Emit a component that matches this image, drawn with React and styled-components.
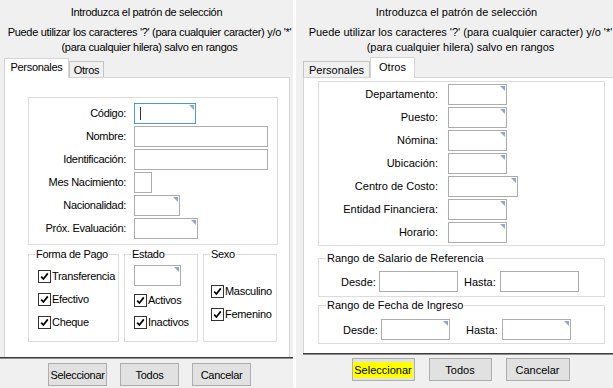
import React from 'react';
import styled, { createGlobalStyle, css } from 'styled-components';

const Global = createGlobalStyle`
  html, body { margin: 0; padding: 0; background: #ffffff; }
  body {
    font-family: "Liberation Sans", Arial, sans-serif;
    font-size: 11px;
    color: #000;
  }
  * { box-sizing: border-box; }
`;

const Screen = styled.div`
  display: flex;
  gap: 3px;
  width: 613px;
  height: 388px;
  overflow: hidden;
`;

const Dialog = styled.div`
  flex: none;
  width: ${(p) => p.$w}px;
  height: ${(p) => p.$h}px;
  background: #f0f0f0;
  display: flex;
  flex-direction: column;
  letter-spacing: ${(p) => (p.$narrow ? '-0.3px' : '0')};
  overflow: hidden;
`;

const Title = styled.div`
  padding-top: 5px;
  line-height: 14px;
  text-align: center;
`;

const Subtitle = styled.div`
  margin-top: 6px;
  padding-left: ${(p) => p.$shift}px;
  line-height: 15px;
  text-align: center;
  white-space: nowrap;
`;

const TabStrip = styled.div`
  display: flex;
  align-items: flex-end;
  height: 20px;
  margin-top: 2px;
  margin-left: ${(p) => p.$inset}px;
`;

const Tab = styled.div`
  position: relative;
  width: ${(p) => p.$w}px;
  display: flex;
  align-items: center;
  justify-content: center;
  border: 1px solid ${(p) => (p.$active ? '#d4d4d4' : '#c4c4c4')};
  border-bottom: none;
  ${(p) =>
    p.$active
      ? css`
          height: ${p.$h || 21}px;
          margin-bottom: -1px;
          background: #ffffff;
          z-index: 1;
          padding-bottom: 3px;
        `
      : css`
          height: 16px;
          background: #f0f0f0;
        `}
`;

const Panel = styled.div`
  flex: 1;
  background: #ffffff;
  border: 1px solid #d4d4d4;
  border-bottom: none;
  margin-left: ${(p) => p.$inset}px;
  margin-right: 3px;
  padding: ${(p) => p.$pad};
  display: flex;
  flex-direction: column;
  align-items: flex-start;
`;

const Separator = styled.div`
  height: 2px;
  margin-left: ${(p) => p.$inset}px;
  border-top: 1px solid #3c3c3c;
  border-bottom: 1px solid #8c8c8c;
`;

const ButtonRow = styled.div`
  display: flex;
  justify-content: center;
  gap: ${(p) => p.$gap}px;
  padding: ${(p) => p.$pt}px 0 ${(p) => p.$pb}px ${(p) => p.$shift}px;
`;

const Button = styled.div`
  width: ${(p) => p.$w}px;
  height: 23px;
  display: flex;
  align-items: center;
  justify-content: center;
  background: #e1e1e1;
  border: 1px solid #adadad;
`;

const Highlight = styled.span`
  background: #ffff00;
  padding: 2px 1px;
  line-height: 12px;
`;

const Box = styled.div`
  width: ${(p) => p.$w}px;
  border: 1px solid #dcdcdc;
  padding: ${(p) => p.$pad};
  display: grid;
  grid-template-columns: ${(p) => p.$labelW}px auto;
  column-gap: ${(p) => p.$gap}px;
  row-gap: 2px;
  align-items: center;
  justify-items: start;
`;

const Label = styled.span`
  justify-self: end;
  white-space: nowrap;
  line-height: 13px;
`;

const Field = styled.div`
  position: relative;
  flex: none;
  width: ${(p) => p.$w}px;
  height: 21px;
  background: #ffffff;
  border: 1px solid ${(p) => (p.$focus ? '#4b97e3' : '#acacac')};
  display: flex;
  align-items: center;
  ${(p) =>
    p.$combo &&
    css`
      &::after {
        content: '';
        position: absolute;
        top: 1px;
        right: 1px;
        border-top: 5px solid #93a6c3;
        border-left: 5px solid transparent;
      }
    `}
`;

const Caret = styled.span`
  width: 1px;
  height: 13px;
  margin-left: 5px;
  background: #333;
`;

const GroupRow = styled.div`
  display: flex;
  gap: ${(p) => p.$gap}px;
  margin-top: ${(p) => p.$mt}px;
`;

const Group = styled.fieldset`
  margin: 0;
  min-width: 0;
  width: ${(p) => p.$w}px;
  height: ${(p) => p.$h}px;
  border: 1px solid #dcdcdc;
  padding: 0 4px 0 ${(p) => p.$pl}px;
  margin-top: ${(p) => p.$mt || 0}px;
`;

const Legend = styled.legend`
  padding: 0 1px;
  line-height: 13px;
`;

const Stack = styled.div`
  display: flex;
  flex-direction: column;
  align-items: flex-start;
  gap: ${(p) => p.$gap}px;
  padding-top: ${(p) => p.$pt}px;
  padding-left: ${(p) => p.$pl}px;
`;

const CheckRow = styled.div`
  display: flex;
  align-items: center;
  gap: 1px;
  height: 16px;
  white-space: nowrap;
`;

const CheckBox = styled.span`
  width: 13px;
  height: 13px;
  flex: none;
  background: #fff;
  border: 1px solid #333;
  display: flex;
  align-items: center;
  justify-content: center;
`;

const RangeRow = styled.div`
  display: flex;
  align-items: center;
  padding-top: ${(p) => p.$pt}px;
  padding-left: ${(p) => p.$pl}px;
`;

const RangeLabel = styled.span`
  width: ${(p) => p.$w}px;
  margin-left: ${(p) => p.$ml || 0}px;
  margin-right: 4px;
  white-space: nowrap;
`;

function Check({ children }) {
  return (
    <CheckRow>
      <CheckBox>
        <svg width="9" height="9" viewBox="0 0 9 9">
          <path d="M1.2 4.6 L3.4 7 L7.8 1.4" fill="none" stroke="#000" strokeWidth="1.7" />
        </svg>
      </CheckBox>
      <span>{children}</span>
    </CheckRow>
  );
}

function Header({ shift, inset, tabs }) {
  return (
    <>
      <Title>Introduzca el patrón de selección</Title>
      <Subtitle $shift={shift}>
        Puede utilizar los caracteres '?' (para cualquier caracter) y/o '*'
        <br />
        (para cualquier hilera) salvo en rangos
      </Subtitle>
      <TabStrip $inset={inset}>
        {tabs.map((t) => (
          <Tab key={t.label} $w={t.w} $active={t.active} $h={t.h}>
            {t.label}
          </Tab>
        ))}
      </TabStrip>
    </>
  );
}

function Footer({ inset, gap, pt, pb, shift, widths, highlight }) {
  return (
    <>
      <Separator $inset={inset} />
      <ButtonRow $gap={gap} $pt={pt} $pb={pb} $shift={shift}>
        <Button $w={widths[0]}>
          {highlight ? <Highlight>Seleccionar</Highlight> : 'Seleccionar'}
        </Button>
        <Button $w={widths[1]}>Todos</Button>
        <Button $w={widths[2]}>Cancelar</Button>
      </ButtonRow>
    </>
  );
}

function Personales() {
  return (
    <Dialog $w={293} $h={388} $narrow>
      <Header
        shift={6}
        inset={4}
        tabs={[
          { label: 'Personales', w: 65, active: true, h: 20 },
          { label: 'Otros', w: 35 },
        ]}
      />
      <Panel $inset={4} $pad="19px 0 0 23px">
        <Box $w={250} $labelW={97} $gap={8} $pad="5px 0 5px 0">
          <Label>Código:</Label>
          <Field $w={62} $focus $combo>
            <Caret />
          </Field>
          <Label>Nombre:</Label>
          <Field $w={134} />
          <Label>Identificación:</Label>
          <Field $w={134} />
          <Label>Mes Nacimiento:</Label>
          <Field $w={18} />
          <Label>Nacionalidad:</Label>
          <Field $w={46} $combo />
          <Label>Próx. Evaluación:</Label>
          <Field $w={64} $combo />
        </Box>
        <GroupRow $gap={5} $mt={3}>
          <Group $w={91} $h={94} $pl={6}>
            <Legend>Forma de Pago</Legend>
            <Stack $gap={7} $pt={7} $pl={3}>
              <Check>Transferencia</Check>
              <Check>Efectivo</Check>
              <Check>Cheque</Check>
            </Stack>
          </Group>
          <Group $w={74} $h={94} $pl={6}>
            <Legend>Estado</Legend>
            <Stack $gap={6} $pt={4} $pl={3}>
              <Field $w={47} $combo />
              <Check>Activos</Check>
              <Check>Inactivos</Check>
            </Stack>
          </Group>
          <Group $w={74} $h={94} $pl={6}>
            <Legend>Sexo</Legend>
            <Stack $gap={7} $pt={22} $pl={1}>
              <Check>Masculino</Check>
              <Check>Femenino</Check>
            </Stack>
          </Group>
        </GroupRow>
      </Panel>
      <Footer inset={0} gap={13} pt={4} pb={2} shift={6} widths={[59, 59, 59]} />
    </Dialog>
  );
}

function Otros() {
  return (
    <Dialog $w={321} $h={388}>
      <Header
        shift={8}
        inset={7}
        tabs={[
          { label: 'Personales', w: 67 },
          { label: 'Otros', w: 45, active: true },
        ]}
      />
      <Panel $inset={7} $pad="3px 0 0 14px">
        <Box $w={287} $labelW={119} $gap={10} $pad="2px 0 2px 0">
          <Label>Departamento:</Label>
          <Field $w={59} $combo />
          <Label>Puesto:</Label>
          <Field $w={59} $combo />
          <Label>Nómina:</Label>
          <Field $w={59} $combo />
          <Label>Ubicación:</Label>
          <Field $w={59} $combo />
          <Label>Centro de Costo:</Label>
          <Field $w={70} $combo />
          <Label>Entidad Financiera:</Label>
          <Field $w={59} $combo />
          <Label>Horario:</Label>
          <Field $w={59} $combo />
        </Box>
        <Group $w={287} $h={45} $pl={7} $mt={6}>
          <Legend>Rango de Salario de Referencia</Legend>
          <RangeRow $pt={6} $pl={15}>
            <RangeLabel $w={34}>Desde:</RangeLabel>
            <Field $w={79} />
            <RangeLabel $w={32} $ml={6}>Hasta:</RangeLabel>
            <Field $w={79} />
          </RangeRow>
        </Group>
        <Group $w={287} $h={45} $pl={7} $mt={2}>
          <Legend>Rango de Fecha de Ingreso</Legend>
          <RangeRow $pt={7} $pl={17}>
            <RangeLabel $w={34}>Desde:</RangeLabel>
            <Field $w={69} $combo />
            <RangeLabel $w={32} $ml={16}>Hasta:</RangeLabel>
            <Field $w={69} $combo />
          </RangeRow>
        </Group>
      </Panel>
      <Footer inset={7} gap={14} pt={3} pb={7} shift={8} widths={[63, 63, 64]} highlight />
    </Dialog>
  );
}

export default function App() {
  return (
    <>
      <Global />
      <Screen>
        <Personales />
        <Otros />
      </Screen>
    </>
  );
}
